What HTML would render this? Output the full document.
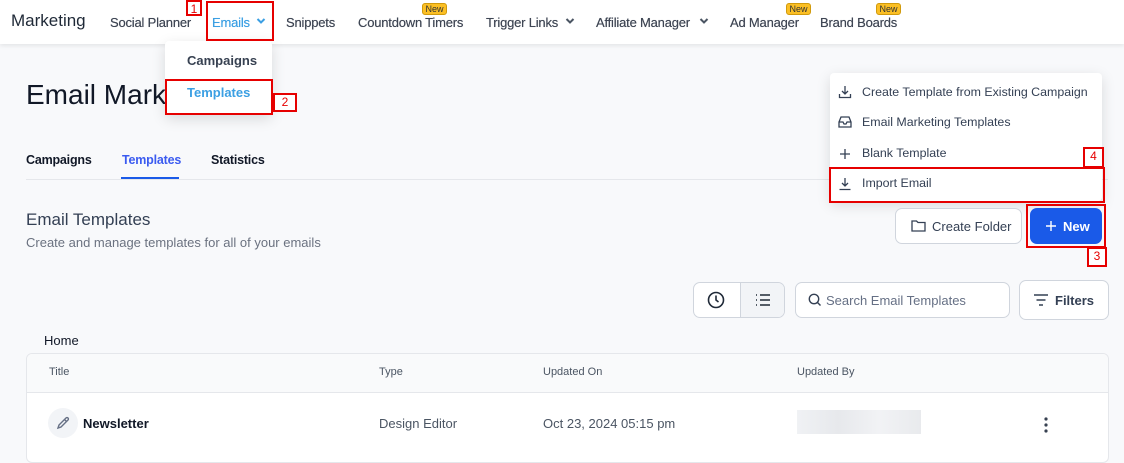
<!DOCTYPE html>
<html><head><meta charset="utf-8"><style>
*{box-sizing:border-box;margin:0;padding:0}
body{width:1124px;height:460px;overflow:hidden;background:#f8f9fb;font-family:"Liberation Sans",sans-serif;position:relative;color:#111827}
.a{position:absolute;white-space:nowrap}
.hdr{position:absolute;left:0;top:0;width:1124px;height:44px;background:#fff;box-shadow:0 2px 4px rgba(0,0,0,.08)}
.nav{font-size:13px;color:#3f4654;top:15px;text-shadow:0 0 .4px #3f4654;letter-spacing:-0.2px}
.new{position:absolute;background:#fbbf24;border:1px solid #d19a0c;border-radius:3px;font-size:9px;color:#333;width:25px;height:12px;line-height:10px;text-align:center;top:3px}
.rb{position:absolute;border:2px solid #e60000}
.num{position:absolute;border:2px solid #e60000;color:#e60000;font-size:12px;text-align:center;line-height:15px;background:#fff}
.menu{position:absolute;background:#fff;border-radius:4px;box-shadow:0 4px 14px rgba(0,0,0,.13)}
.mi{position:absolute;font-size:12.4px;color:#344054}
svg{position:absolute}
.th{font-size:11px;color:#4b5563;top:366px}
.tab{font-size:12.5px;font-weight:bold;top:153px;letter-spacing:-0.2px}
</style></head><body>
<div class="hdr"></div>
<div class="a" style="left:11px;top:11px;font-size:17px;color:#1f2937">Marketing</div>
<div class="a nav" style="left:110px">Social Planner</div>
<div class="a nav" style="left:212px;color:#3b9fe3;text-shadow:0 0 .4px #3b9fe3">Emails</div>
<svg style="left:256px;top:17px" width="10" height="8" viewBox="0 0 10 8"><path d="M1.5 2l3.5 3.5 3.5-3.5" stroke="#3b9fe3" stroke-width="2" fill="none"/></svg>
<div class="a nav" style="left:286px">Snippets</div>
<div class="a nav" style="left:358px">Countdown Timers</div>
<div class="new" style="left:422px">New</div>
<div class="a nav" style="left:486px">Trigger Links</div>
<svg style="left:565px;top:17px" width="10" height="8" viewBox="0 0 10 8"><path d="M1.5 2l3.5 3.5 3.5-3.5" stroke="#4b5563" stroke-width="2" fill="none"/></svg>
<div class="a nav" style="left:596px">Affiliate Manager</div>
<svg style="left:699px;top:17px" width="10" height="8" viewBox="0 0 10 8"><path d="M1.5 2l3.5 3.5 3.5-3.5" stroke="#4b5563" stroke-width="2" fill="none"/></svg>
<div class="a nav" style="left:730px">Ad Manager</div>
<div class="new" style="left:786px">New</div>
<div class="a nav" style="left:820px">Brand Boards</div>
<div class="new" style="left:876px">New</div>

<div class="menu" style="left:165px;top:41px;width:107px;height:74px"></div>
<div class="a" style="left:187px;top:53px;font-size:13px;font-weight:bold;color:#374151">Campaigns</div>
<div class="a" style="left:187px;top:85px;font-size:13px;font-weight:bold;color:#3b9fe3">Templates</div>

<div class="a" style="left:26px;top:79px;font-size:28px;color:#111827">Email Mark</div>

<div class="a tab" style="left:26px">Campaigns</div>
<div class="a tab" style="left:122px;color:#3b5bf0">Templates</div>
<div class="a tab" style="left:211px">Statistics</div>
<div class="a" style="left:26px;top:179px;width:1082px;height:1px;background:#e5e7eb"></div>
<div class="a" style="left:121px;top:177px;width:58px;height:2px;background:#1a5ae8"></div>

<div class="a" style="left:26px;top:210px;font-size:17px;color:#344054">Email Templates</div>
<div class="a" style="left:26px;top:235px;font-size:13px;color:#6b7280">Create and manage templates for all of your emails</div>

<div class="menu" style="left:830px;top:73px;width:272px;height:128px"></div>
<svg style="left:838px;top:85px" width="14" height="14" viewBox="0 0 14 14" fill="none" stroke="#344054" stroke-width="1.3"><path d="M7 1v8M4 6l3 3 3-3M1.5 9v3.5h11V9"/></svg>
<div class="mi" style="left:862px;top:85px">Create Template from Existing Campaign</div>
<svg style="left:838px;top:116px" width="14" height="12" viewBox="0 0 14 12" fill="none" stroke="#344054" stroke-width="1.3"><path d="M1 6l2-5h8l2 5v5H1zM1 6h4l1 2h2l1-2h4"/></svg>
<div class="mi" style="left:862px;top:115px">Email Marketing Templates</div>
<svg style="left:838px;top:147px" width="14" height="14" viewBox="0 0 14 14" stroke="#344054" stroke-width="1.3"><path d="M7 2v10M2 7h10"/></svg>
<div class="mi" style="left:862px;top:146px">Blank Template</div>
<svg style="left:838px;top:177px" width="14" height="14" viewBox="0 0 14 14" fill="none" stroke="#344054" stroke-width="1.3"><path d="M7 1v8M4 6l3 3 3-3M1.5 12.5h11"/></svg>
<div class="mi" style="left:862px;top:176px">Import Email</div>

<div class="a" style="left:895px;top:208px;width:127px;height:36px;background:#fff;border:1px solid #d0d5dd;border-radius:7px"></div>
<svg style="left:911px;top:219px" width="15" height="13" viewBox="0 0 15 13" fill="none" stroke="#344054" stroke-width="1.3"><path d="M1 2h4.5l1.5 1.5h7v8.5H1z"/></svg>
<div class="a" style="left:932px;top:219px;font-size:13px;color:#344054">Create Folder</div>
<div class="a" style="left:1030px;top:208px;width:72px;height:36px;background:#1a5ae8;border-radius:7px"></div>
<svg style="left:1045px;top:220px" width="12" height="12" viewBox="0 0 12 12" stroke="#fff" stroke-width="1.4"><path d="M6 1v10M1 6h10"/></svg>
<div class="a" style="left:1063px;top:219px;font-size:13px;font-weight:bold;color:#fff">New</div>

<div class="a" style="left:693px;top:282px;width:92px;height:36px;background:#fff;border:1px solid #d0d5dd;border-radius:7px;overflow:hidden"><div style="position:absolute;left:46px;top:0;width:46px;height:36px;background:#f2f4f7;border-left:1px solid #d0d5dd"></div></div>
<svg style="left:707px;top:291px" width="18" height="18" viewBox="0 0 18 18" fill="none" stroke="#1f2937" stroke-width="1.6"><circle cx="9" cy="9" r="7.5"/><path d="M9 4.5V9l2.5 2"/></svg>
<svg style="left:754px;top:292px" width="18" height="16" viewBox="0 0 18 16" fill="none" stroke="#1f2937" stroke-width="1.6"><path d="M2 3h1M2 8h1M2 13h1M6 3h10M6 8h10M6 13h10"/></svg>
<div class="a" style="left:795px;top:282px;width:215px;height:36px;background:#fff;border:1px solid #d0d5dd;border-radius:7px"></div>
<svg style="left:808px;top:293px" width="14" height="14" viewBox="0 0 14 14" fill="none" stroke="#344054" stroke-width="1.4"><circle cx="6" cy="6" r="4.7"/><path d="M9.5 9.5l3 3"/></svg>
<div class="a" style="left:826px;top:293px;font-size:13px;color:#667085">Search Email Templates</div>
<div class="a" style="left:1019px;top:280px;width:90px;height:40px;background:#fff;border:1px solid #d0d5dd;border-radius:7px"></div>
<svg style="left:1033px;top:293px" width="16" height="14" viewBox="0 0 16 14" stroke="#344054" stroke-width="1.5"><path d="M1 2h14M3.5 7h9M6 12h4"/></svg>
<div class="a" style="left:1055px;top:293px;font-size:13px;font-weight:bold;color:#344054">Filters</div>

<div class="a" style="left:44px;top:333px;font-size:13px;color:#111827">Home</div>
<div class="a" style="left:26px;top:353px;width:1083px;height:110px;background:#fff;border:1px solid #e5e7eb;border-radius:6px;overflow:hidden"><div style="height:39px;background:#f9fafb;border-bottom:1px solid #e5e7eb"></div></div>
<div class="a th" style="left:49px">Title</div>
<div class="a th" style="left:379px">Type</div>
<div class="a th" style="left:543px">Updated On</div>
<div class="a th" style="left:797px">Updated By</div>
<div class="a" style="left:48px;top:408px;width:30px;height:30px;border-radius:50%;background:#f2f4f7"></div>
<svg style="left:55px;top:415px" width="16" height="16" viewBox="0 0 16 16" fill="none" stroke="#667085" stroke-width="1.4"><path d="M3 13l1-3 7-7a1.4 1.4 0 012 2l-7 7z M9.5 4.5l2 2"/></svg>
<div class="a" style="left:83px;top:416px;font-size:13px;font-weight:bold;color:#111827">Newsletter</div>
<div class="a" style="left:379px;top:416px;font-size:13px;color:#4b5563">Design Editor</div>
<div class="a" style="left:543px;top:416px;font-size:13px;color:#4b5563">Oct 23, 2024 05:15 pm</div>
<div class="a" style="left:797px;top:410px;width:124px;height:24px;background:linear-gradient(90deg,#eef0f3,#e4e6ea,#f0f1f4,#e6e8eb);opacity:.9"></div>
<svg style="left:1042px;top:416px" width="8" height="18" viewBox="0 0 8 18" fill="#374151"><circle cx="4" cy="3" r="1.6"/><circle cx="4" cy="9" r="1.6"/><circle cx="4" cy="15" r="1.6"/></svg>

<div class="rb" style="left:206px;top:1px;width:68px;height:40px"></div>
<div class="num" style="left:186px;top:0;width:16px;height:16px">1</div>
<div class="rb" style="left:165px;top:79px;width:108px;height:36px"></div>
<div class="num" style="left:273px;top:93px;width:24px;height:19px">2</div>
<div class="rb" style="left:829px;top:167px;width:276px;height:36px"></div>
<div class="num" style="left:1083px;top:147px;width:21px;height:21px">4</div>
<div class="rb" style="left:1026px;top:204px;width:80px;height:44px"></div>
<div class="num" style="left:1087px;top:247px;width:20px;height:20px">3</div>
</body></html>
